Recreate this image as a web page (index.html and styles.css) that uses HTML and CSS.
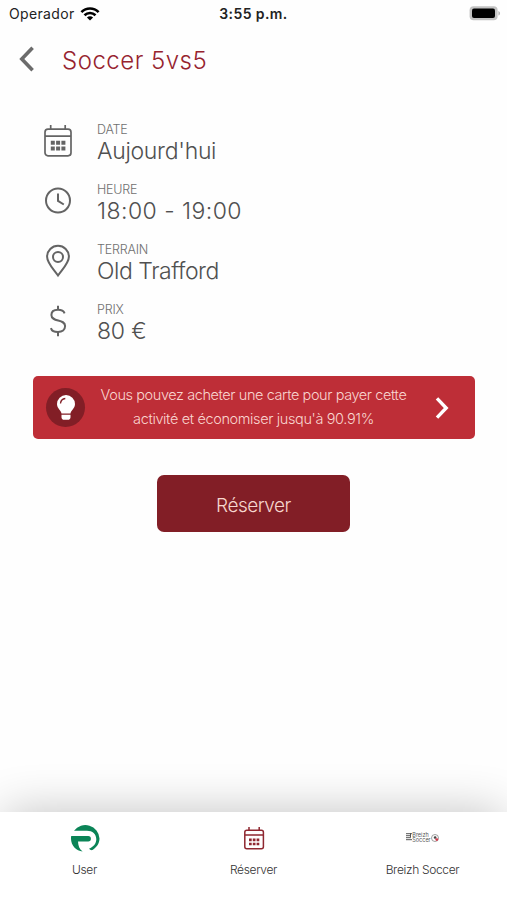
FILE: index.html
```html
<!DOCTYPE html>
<html lang="fr">
  <head>
    <meta charset="UTF-8" />
    <meta name="viewport" content="width=device-width, initial-scale=1.0" />
    <title>Soccer 5vs5</title>
    <link rel="stylesheet" href="styles.css">
  </head>
  <body>
    <!-- Status Bar -->
    <div class="status-bar">
      <div class="carrier">
        <span>Operador</span>
        <svg class="wifi" width="20" height="14" viewBox="0 0 20 14" fill="none" stroke="#000" stroke-width="2.6">
          <path d="M1.4 5.2C6.3 .3 13.7 .3 18.6 5.2" />
          <path d="M4.5 8.3c3.1-3 7.9-3 11 0" />
          <path d="M10 13.6 6.9 10.5c1.8-1.6 4.4-1.6 6.2 0z" fill="#000" stroke="none" />
        </svg>
      </div>
      <span class="time">3:55 p.m.</span>
      <svg class="battery" width="32" height="15" viewBox="0 0 32 15">
        <rect x=".6" y=".2" width="28" height="14" rx="4" fill="#c2c2c2" />
        <rect x="3" y="2.4" width="23" height="9.6" rx="2" fill="#000" />
        <path d="M29.4 5c2.200.8 2.200 3.800 0 4.600z" fill="#b5b5b5" />
      </svg>
    </div>

    <!-- Page Header -->
    <header class="header">
      <svg class="back" width="16" height="26" viewBox="0 0 16 26" fill="none" stroke="#6b6b6b" stroke-width="3.6">
        <path d="M13.6 1.8 2.8 13l10.8 11.2" />
      </svg>
      <h1>Soccer 5vs5</h1>
    </header>

    <!-- Booking Details -->
    <main>
      <ul class="details">
        <li>
          <svg class="icon" width="30" height="34" viewBox="0 0 30 34" fill="none" stroke="#646464" stroke-width="1.7">
            <rect x="2" y="5.2" width="26" height="26.6" rx="3" />
            <path d="M2 12.2h26M7.700 1v4.400M22.200 1v4.400" />
            <path d="M7.800 18.700h14.600M7.800 24.400h14.600" stroke-width="4" stroke-dasharray="4 1.300" />
          </svg>
          <div class="info">
            <span class="label">DATE</span>
            <span class="value today">Aujourd'hui</span>
          </div>
        </li>
        <li>
          <svg class="icon" width="30" height="34" viewBox="0 0 30 34" fill="none" stroke="#646464" stroke-width="2">
            <circle cx="15" cy="16.5" r="12" />
            <path d="M15 9.500v7.400l5.800 3.600" />
          </svg>
          <div class="info">
            <span class="label">HEURE</span>
            <span class="value slot">18:00 - 19:00</span>
          </div>
        </li>
        <li>
          <svg class="icon" width="30" height="34" viewBox="0 0 30 34" fill="none" stroke="#646464" stroke-width="2">
            <path d="M15 31.500C10.500 25 4.100 19 4.100 12.700a10.900 10.900 0 0 1 21.800 0C25.900 19 19.500 25 15 31.500z" />
            <circle cx="15" cy="12.900" r="5" />
          </svg>
          <div class="info">
            <span class="label">TERRAIN</span>
            <span class="value stadium">Old Trafford</span>
          </div>
        </li>
        <li>
          <svg class="icon" width="30" height="34" viewBox="0 0 30 34" fill="none" stroke="#646464" stroke-width="2">
            <path d="M15 1.800v4.200M15 28v4.200" />
            <path d="M21.600 9.300C20.700 7 18.300 5.800 15 5.800c-4 0-6.600 2-6.600 5.300 0 7.500 13.700 3.400 13.700 11 0 3.800-3 5.900-7.100 5.900-3.700 0-6.300-1.200-7.100-3.900" />
          </svg>
          <div class="info">
            <span class="label">PRIX</span>
            <span class="value amount">80 €</span>
          </div>
        </li>
      </ul>

      <!-- Card Offer -->
      <a class="offer">
        <span class="bulb">
          <svg width="20" height="28" viewBox="0 0 20 28">
            <path d="M10 1a9 9 0 0 0-9 9c0 4.600 4 6 4.500 9.500h9C15 16 19 14.600 19 10a9 9 0 0 0-9-9z" fill="#fff" />
            <path d="M5.500 20.800h9v2.400c0 1.400-1 2.600-2.600 2.600H8.100c-1.600 0-2.600-1.200-2.600-2.600z" fill="#fff" />
            <path d="M4.500 9.500C4.700 6.800 6.600 4.800 9.300 4.500" fill="none" stroke="#821e26" stroke-width="1.300" />
          </svg>
        </span>
        <p>
          <span class="line-one">Vous pouvez acheter une carte pour payer cette</span>
          <span class="line-two">activité et économiser jusqu'à 90.91%</span>
        </p>
        <svg class="next" width="14" height="22" viewBox="0 0 14 22" fill="none" stroke="#fff" stroke-width="3.400">
          <path d="m2 1.400 9.200 9.600L2 20.600" />
        </svg>
      </a>

      <button class="reserve" type="button"><span>Réserver</span></button>
    </main>

    <!-- Tab Bar -->
    <nav class="tabs">
      <a class="tab">
        <svg width="30" height="30" viewBox="0 0 30 30" fill="#0b8457">
          <path d="M4 6.700A14.200 14.200 0 0 1 29.500 14.500c0 5-3 9-7 11.500-1.400.4-2.400 0-3.500-1.200 4.500-1.800 7.300-5.300 7.300-9.500 0-5.300-3.800-8.600-9.300-8.600z" />
          <path d="M1.200 12h17a2.700 2.700 0 0 1 0 5.400H8c.3 4.200 1.200 7.600 4.600 10.200C5.500 26.800-.2 20.500 1.200 12z" />
        </svg>
        <span class="user">User</span>
      </a>
      <a class="tab">
        <svg width="30" height="30" viewBox="0 0 30 30" fill="none" stroke="#8f2730" stroke-width="1.500">
          <rect x="5.800" y="6.200" width="18.600" height="18.500" rx="2" />
          <path d="M5.800 11.100h18.600M10 2.900v3.300M20.200 2.900v3.300" />
          <path d="M10 15.900h10.300M10 20h10.300" stroke-width="2.700" stroke-dasharray="2.700 1.100" />
        </svg>
        <span class="book">Réserver</span>
      </a>
      <a class="tab">
        <span class="club-logo">
          <svg width="6" height="9" viewBox="0 0 6 9">
            <path d="M0 .7h6M0 2.700h4M0 4.700h5M0 6.700h6M4.500 0v4" stroke="#555" stroke-width="1" />
          </svg>
          <span class="club-name"><b>Breizh</b><b>Soccer</b></span>
          <svg width="8" height="8" viewBox="0 0 8 8">
            <circle cx="4" cy="4" r="3.500" fill="#fff" stroke="#777" stroke-width=".7" />
            <path d="m3 2.500 2-.3.600 1.700L4 5 2.700 4zM1 2l1-1" fill="#444" />
            <circle cx="5.800" cy="5.600" r="1.400" fill="#d33b4c" />
          </svg>
        </span>
        <span class="club">Breizh Soccer</span>
      </a>
    </nav>
  </body>
</html>
```
FILE: styles.css
```css
* {
  box-sizing: border-box;
}
body {
  display: flex;
  flex-direction: column;
  height: 900px;
  margin: 0;
  overflow: hidden;
  background-color: #fefefe;
  color: #505050;
  font-family: Inter, "Liberation Sans", sans-serif;
  font-weight: 300;
}
svg {
  display: block;
  flex: none;
}
span {
  white-space: nowrap;
}

/* Status Bar */
.status-bar {
  display: grid;
  grid-template-columns: 1fr auto 1fr;
  align-items: center;
  height: 27px;
  padding: 0 6px 0 9px;
  color: #222222;
  font-size: 14px;
  font-weight: 400;
}
.carrier {
  display: flex;
  align-items: center;
  column-gap: 5px;
  letter-spacing: 0.35px;
}
.time {
  margin-right: 3px;
  font-weight: 600;
  letter-spacing: 0.4px;
}
.battery {
  justify-self: end;
}

/* Page Header */
.header {
  display: flex;
  align-items: center;
  height: 64px;
  padding-left: 19px;
}
.header h1 {
  margin: 3px 0 0 27px;
  color: #96232e;
  font-size: 24px;
  font-weight: 300;
  line-height: 30px;
  letter-spacing: 0.5px;
}

/* Booking Details */
main {
  flex: 1;
}
.details {
  margin: 0;
  padding: 30px 0 0 43px;
  list-style: none;
}
.details li {
  display: flex;
  height: 60px;
}
.icon {
  margin-top: 3px;
}
.info {
  display: flex;
  flex-direction: column;
  margin-left: 24px;
}
.label {
  height: 18px;
  color: #707070;
  font-size: 12.5px;
  line-height: 18px;
  letter-spacing: -0.2px;
}
.value {
  font-size: 23px;
  line-height: 25px;
}
.today {
  letter-spacing: -0.3px;
}
.slot {
  letter-spacing: 0.45px;
}
.stadium {
  letter-spacing: -0.45px;
}
.amount {
  letter-spacing: -0.2px;
}

/* Card Offer */
.offer {
  display: flex;
  align-items: center;
  height: 63px;
  margin: 15px 32px 0 33px;
  padding: 0 26px 0 13px;
  border-radius: 5px;
  background-color: #be2e37;
  color: #f9d5cf;
}
.bulb {
  display: flex;
  align-items: center;
  justify-content: center;
  width: 39px;
  height: 39px;
  border-radius: 50%;
  background-color: #821e26;
}
.offer p {
  display: flex;
  flex: 1;
  flex-direction: column;
  align-items: center;
  margin: 0 13px 2px 0;
  font-size: 14.5px;
  line-height: 24px;
}
.line-one {
  letter-spacing: -0.41px;
}
.line-two {
  letter-spacing: -0.37px;
}

.reserve {
  display: flex;
  align-items: center;
  justify-content: center;
  width: 193px;
  height: 57px;
  margin: 36px auto 0 157px;
  padding-top: 4px;
  border: none;
  border-radius: 7px;
  background-color: #821e26;
  color: #f6d6ce;
  font-family: inherit;
  font-size: 19px;
  font-weight: 300;
  letter-spacing: -0.5px;
}

/* Tab Bar */
.tabs {
  display: grid;
  grid-template-columns: repeat(3, 1fr);
  height: 88px;
  background-color: #ffffff;
  box-shadow: 0 -4px 48px -4px rgba(0, 0, 0, 0.24);
}
.tab {
  display: flex;
  flex-direction: column;
  align-items: center;
  padding-top: 12px;
  color: #333333;
  font-size: 12px;
  line-height: 16px;
  letter-spacing: -0.33px;
}
.tab > span:last-child {
  margin-top: 8px;
}
.club-logo {
  display: flex;
  align-items: center;
  height: 30px;
  padding-bottom: 3px;
}
.club-name {
  display: flex;
  flex-direction: column;
  color: #555555;
  font-size: 5.5px;
  line-height: 4.5px;
  letter-spacing: 0;
}
```
